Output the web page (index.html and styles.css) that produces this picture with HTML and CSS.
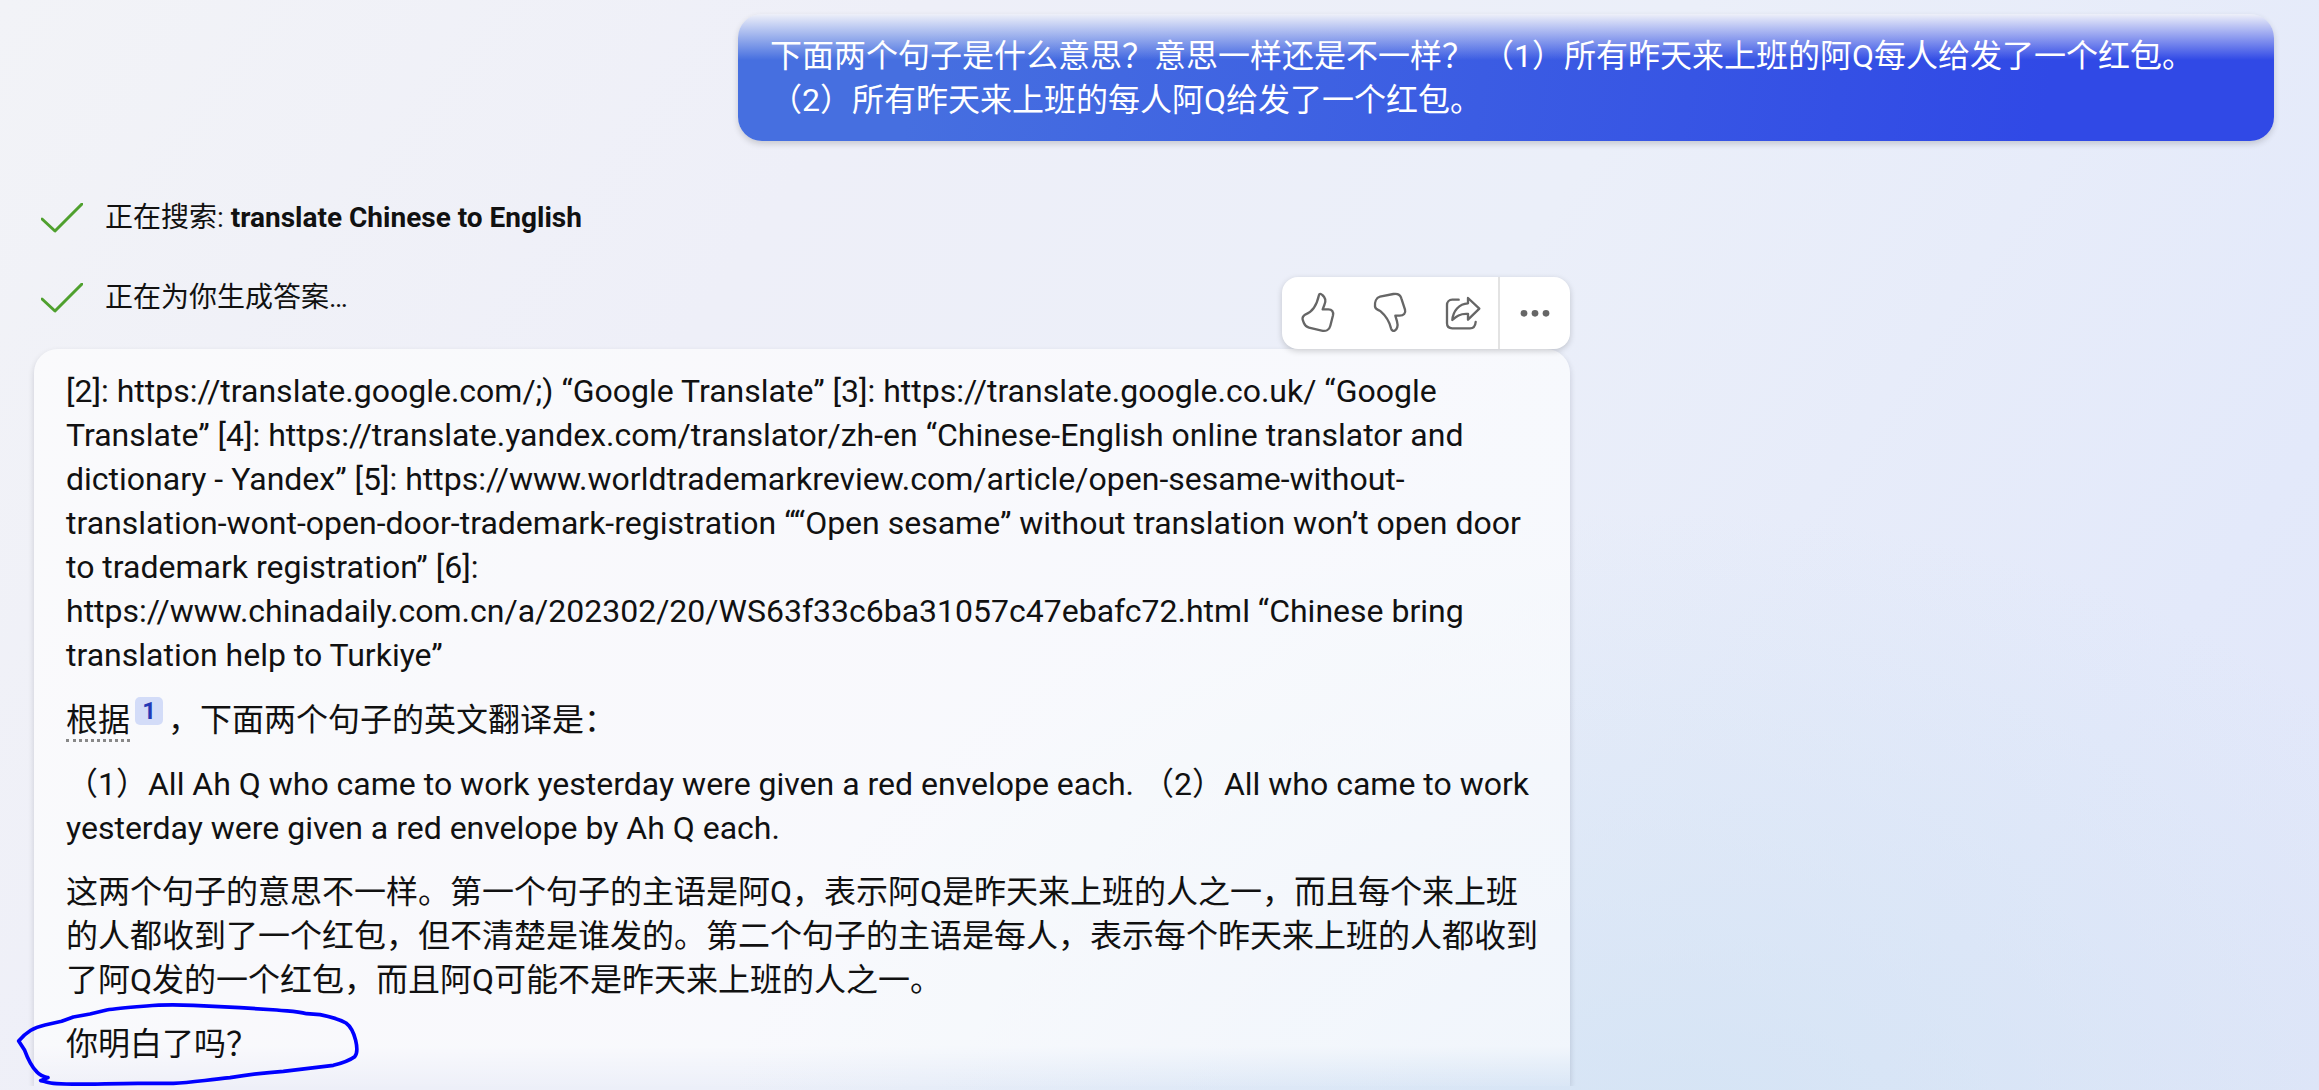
FILE: index.html
```html
<!DOCTYPE html>
<html lang="zh-CN">
<head>
<meta charset="utf-8">
<meta name="viewport" content="width=device-width, initial-scale=1">
<title>聊天</title>
<link rel="stylesheet" href="styles.css">
</head>
<body>
<main class="chat">
  <section class="bubble">
    <p>下面两个句子是什么意思？意思一样还是不一样？ （1）所有昨天来上班的阿Q每人给发了一个红包。（2）所有昨天来上班的每人阿Q给发了一个红包。</p>
  </section>

  <ul class="status">
    <li class="status-item">
      <svg class="check" viewBox="0 0 42 30" aria-hidden="true"><path d="M1 16 14 28 41 1"/></svg>
      <span>正在搜索: <strong>translate Chinese to English</strong></span>
    </li>
    <li class="status-item">
      <svg class="check" viewBox="0 0 42 30" aria-hidden="true"><path d="M1 16 14 28 41 1"/></svg>
      <span>正在为你生成答案…</span>
    </li>
  </ul>

  <article class="answer">
    <div class="toolbar">
      <button type="button" class="tool" aria-label="赞">
        <svg viewBox="0 0 216 216" aria-hidden="true"><path d="M111 54C112 49 117 50 121 54C131 62 132 73 127 84L122 97H139C150 97 155 104 153 115L145 146C142 158 132 164 119 161L81 152C73 150 69 146 66 139L62 128C60 120 64 116 71 112C91 105 105 81 111 54Z"/></svg>
      </button>
      <button type="button" class="tool" aria-label="踩">
        <svg viewBox="0 0 216 216" aria-hidden="true"><path d="M78 59 118 51C130 49 139 53 142 64L153 98C156 109 149 116 137 116H124L129 133C133 147 129 158 122 161C117 163 113 160 111 154C106 132 94 115 80 103C73 98 64 98 63 88C62 76 66 62 78 59Z"/></svg>
      </button>
      <button type="button" class="tool" aria-label="分享">
        <svg viewBox="0 0 216 216" aria-hidden="true"><path d="M98 68H79C69 68 63 75 63 84V139C63 149 69 154 79 154H132C143 154 148 147 149 135M126 63 160 95 126 128V111C102 109 90 119 79 129C81 102 99 80 126 79Z"/></svg>
      </button>
      <button type="button" class="tool more" aria-label="更多">
        <svg viewBox="0 0 216 216" aria-hidden="true"><circle cx="78" cy="109" r="10"/><circle cx="111" cy="109" r="10"/><circle cx="144" cy="109" r="10"/></svg>
      </button>
    </div>

    <div class="card">
      <p>[2]: https://translate.google.com/;) “Google Translate” [3]: https://translate.google.co.uk/ “Google Translate” [4]: https://translate.yandex.com/translator/zh-en “Chinese-English online translator and dictionary - Yandex” [5]: https://www.worldtrademarkreview.com/article/open-sesame-without-translation-wont-open-door-trademark-registration ““Open sesame” without translation won’t open door to trademark registration” [6]: https://www.chinadaily.com.cn/a/202302/20/WS63f33c6ba31057c47ebafc72.html “Chinese bring translation help to Turkiye”</p>
      <p><span class="cited">根据</span><a class="cite" href="#source-1">1</a>，下面两个句子的英文翻译是：</p>
      <p>（1）All Ah Q who came to work yesterday were given a red envelope each. （2）All who came to work yesterday were given a red envelope by Ah Q each.</p>
      <p>这两个句子的意思不一样。第一个句子的主语是阿Q，表示阿Q是昨天来上班的人之一，而且每个来上班的人都收到了一个红包，但不清楚是谁发的。第二个句子的主语是每人，表示每个昨天来上班的人都收到了阿Q发的一个红包，而且阿Q可能不是昨天来上班的人之一。</p>
      <div class="closing">
        <p>你明白了吗？</p>
        <svg class="ink" viewBox="0 0 1200 330" aria-hidden="true"><path d="M144 290 122 299C145 302 135 306 170 308C250 313 330 306 430 307H520C570 305 610 298 690 290C740 282 790 275 850 271C900 265 950 259 1000 253C1030 245 1052 236 1064 227C1073 217 1071 195 1067 178C1061 154 1053 137 1038 126C1015 113 985 106 960 101L920 98C890 90 870 91 830 87L720 80 580 73C530 71 480 71 440 75C390 79 350 82 320 87L270 99 220 108 185 121 135 132C100 140 80 152 56 180L74 208C84 235 96 258 110 272C120 283 128 286 144 290"/></svg>
      </div>
    </div>
  </article>
</main>
</body>
</html>
```
FILE: styles.css
```css
* {
  box-sizing: border-box;
}

body {
  margin: 0;
  min-height: 100vh;
  overflow: hidden;
  color: #111;
  font-family: Roboto, "Noto Sans CJK SC", sans-serif;
  font-size: 32px;
  line-height: 44px;
  text-spacing-trim: space-all;
  background:
    radial-gradient(ellipse at 72% 108%, rgba(208, 226, 243, 0.8), rgba(208, 226, 243, 0) 40%),
    linear-gradient(125deg, #f2f3f7 0%, #eeeff8 30%, #ebeff9 55%, #e3e9fa 85%, #e1e6f9 100%);
}

p {
  margin: 0;
}

.chat {
  display: flex;
  flex-direction: column;
  padding: 14px 45px 5px 34px;
}

.bubble {
  align-self: flex-end;
  width: 100%;
  max-width: 1536px;
  padding: 20px 32px 19px;
  border-radius: 24px;
  color: #fff;
  background:
    linear-gradient(to bottom, #eef0f9 0, rgba(238, 240, 249, 0) 46px),
    linear-gradient(100deg, #466fe0 12%, #3049e6 85%);
  box-shadow: 0 3px 6px rgba(0, 0, 0, 0.16);
}

.status {
  display: flex;
  flex-direction: column;
  gap: 36px;
  margin: 0;
  padding: 55px 0 29px 7px;
  list-style: none;
  font-size: 28px;
}

.status-item {
  display: flex;
  align-items: center;
  gap: 22px;
}

.check {
  width: 42px;
  height: 30px;
  fill: none;
  stroke: #4fa02e;
  stroke-width: 3;
  stroke-linejoin: round;
  stroke-linecap: round;
}

.answer {
  position: relative;
  width: 100%;
  max-width: 1536px;
}

.toolbar {
  position: absolute;
  right: 0;
  bottom: 100%;
  z-index: 1;
  display: flex;
  border-radius: 16px;
  background: #fff;
  box-shadow: 0 2px 6px rgba(0, 0, 0, 0.18);
}

.tool {
  width: 72px;
  height: 72px;
  padding: 0;
  border: 0;
  background: none;
}

.tool svg {
  display: block;
  width: 72px;
  height: 72px;
  fill: none;
  stroke: #666;
  stroke-width: 7;
  stroke-linejoin: round;
  stroke-linecap: round;
}

.more {
  box-shadow: inset 2px 0 #e3e3e3;
}

.more svg {
  fill: #666;
  stroke: none;
}

.card {
  display: flex;
  flex-direction: column;
  gap: 20px;
  padding: 20px 32px;
  border-radius: 24px 24px 0 0;
  background: linear-gradient(to bottom, rgba(255, 255, 255, 0.64) calc(100% - 40px), rgba(255, 255, 255, 0.06));
  box-shadow: 0 3px 6px rgba(0, 0, 30, 0.16);
  clip-path: inset(-8px -40px 0);
}

.cited {
  border-bottom: 3px dotted #888;
  line-height: 32px;
}

.cite {
  display: inline-block;
  width: 28px;
  height: 28px;
  margin: 0 5px;
  border-radius: 5px;
  color: #2339b5;
  background: #d3dcf8;
  font-size: 24px;
  font-weight: 700;
  line-height: 28px;
  text-align: center;
  text-decoration: none;
  vertical-align: 12px;
}

.closing {
  position: relative;
}

.ink {
  position: absolute;
  top: -41px;
  left: -66px;
  width: 400px;
  height: 110px;
  fill: none;
  stroke: #00f;
  stroke-width: 11;
  stroke-linejoin: round;
  stroke-linecap: round;
}
```
